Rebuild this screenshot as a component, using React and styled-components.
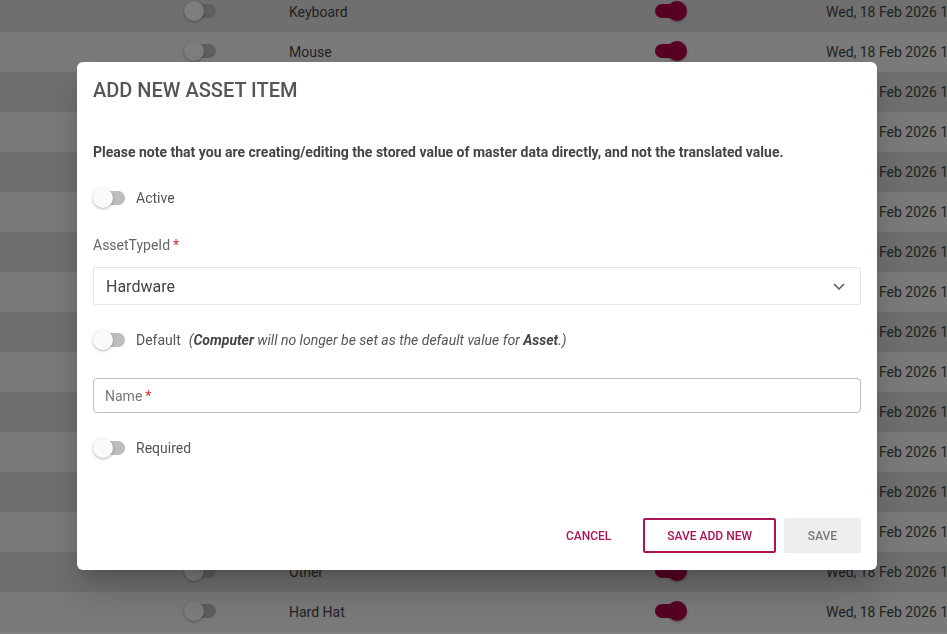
import React from "react";
import styled, { createGlobalStyle } from "styled-components";

const GlobalStyle = createGlobalStyle`
  html, body {
    margin: 0;
    padding: 0;
    height: 100%;
    overflow: hidden;
  }
  body {
    font-family: Roboto, "Noto Sans", "Liberation Sans", sans-serif;
    background: #ffffff;
  }
`;

const CRIMSON = "#ad1457";
const CRIMSON_DARK = "#b0004a";

const rows = [
  "Keyboard",
  "Mouse",
  "Monitor",
  "Laptop",
  "Printer",
  "Scanner",
  "Phone",
  "Tablet",
  "Headset",
  "Docking Station",
  "Webcam",
  "Router",
  "Projector",
  "Cable",
  "Other",
  "Hard Hat",
];

const Table = styled.div`
  display: flex;
  flex-direction: column;
  margin-top: -8px;
`;

const Row = styled.div`
  display: grid;
  grid-template-columns: 105px 366px 171px 1fr;
  align-items: center;
  height: 40px;
  padding-left: 184px;
  background: ${(p) => (p.$odd ? "#f4f4f4" : "#dedede")};
  color: #444;
  font-size: 14px;
  white-space: nowrap;
  overflow: hidden;
`;

const Track = styled.span`
  position: relative;
  display: inline-block;
  width: 32px;
  height: 20px;
  flex-shrink: 0;

  &::before {
    content: "";
    position: absolute;
    left: 7px;
    right: 0;
    top: 3px;
    height: 14px;
    border-radius: 7px;
    background: ${(p) => (p.$on ? CRIMSON_DARK : "#bdbdbd")};
    ${(p) => p.$on && "left: 0; right: 7px;"}
  }

  &::after {
    content: "";
    position: absolute;
    top: 0;
    ${(p) => (p.$on ? "right: 0;" : "left: 0;")}
    width: 20px;
    height: 20px;
    border-radius: 50%;
    background: ${(p) => (p.$on ? CRIMSON_DARK : "#fafafa")};
    box-shadow: 0 1px 3px rgba(0, 0, 0, 0.3);
  }
`;

const Overlay = styled.div`
  position: fixed;
  inset: 0;
  background: rgba(0, 0, 0, 0.5);
  display: flex;
  align-items: flex-start;
  padding: 62px 0 0 77px;
`;

const Dialog = styled.div`
  width: 800px;
  height: 508px;
  box-sizing: border-box;
  background: #ffffff;
  border-radius: 6px;
  box-shadow: 0 11px 15px -7px rgba(0, 0, 0, 0.2), 0 24px 38px 3px rgba(0, 0, 0, 0.14);
  display: flex;
  flex-direction: column;
  padding: 16px 16px 17px;
  color: #555;
`;

const Title = styled.h2`
  margin: 0;
  font-size: 20px;
  line-height: 24px;
  font-weight: 500;
  color: #555;
`;

const Note = styled.p`
  margin: 40px 0 0;
  font-size: 14px;
  line-height: 20px;
  font-weight: 700;
  color: #444;
`;

const SwitchRow = styled.label`
  display: flex;
  align-items: center;
  gap: 11px;
  margin-top: ${(p) => p.$gap}px;
  height: 20px;
  font-size: 14px;
  color: #555;
`;

const Hint = styled.span`
  font-style: italic;
  margin-left: 8px;
  color: #555;

  b {
    font-weight: 700;
    color: #444;
  }
`;

const FieldLabel = styled.div`
  margin-top: 27px;
  font-size: 14px;
  line-height: 20px;
  color: #666;
`;

const Star = styled.span`
  color: #d32f2f;
  margin-left: 3px;
`;

const Select = styled.div`
  margin-top: 12px;
  height: 38px;
  box-sizing: border-box;
  border: 1px solid #e6e6e6;
  border-radius: 2px;
  display: flex;
  align-items: center;
  justify-content: space-between;
  padding: 0 14px 0 12px;
  font-size: 16px;
  color: #444;
`;

const Input = styled.div`
  margin-top: 28px;
  height: 35px;
  box-sizing: border-box;
  border: 1px solid #bdbdbd;
  border-radius: 4px;
  display: flex;
  align-items: center;
  padding: 0 11px;
  font-size: 14px;
  color: #777;
`;

const Footer = styled.div`
  margin-top: auto;
  display: flex;
  justify-content: flex-end;
  align-items: center;
  gap: 8px;
`;

const Button = styled.button`
  height: 35px;
  box-sizing: border-box;
  padding: 0 ${(p) => (p.$variant === "outline" ? 22 : 20)}px;
  font-family: inherit;
  font-size: 12px;
  font-weight: 500;
  text-transform: uppercase;
  border-radius: 2px;
  cursor: pointer;
  border: ${(p) => (p.$variant === "outline" ? `2px solid ${CRIMSON}` : "none")};
  background: ${(p) => (p.$variant === "filled" ? "#eeeeee" : "transparent")};
  color: ${(p) => (p.$variant === "filled" ? "#777" : CRIMSON)};
  min-width: ${(p) => (p.$variant === "filled" ? "77px" : "auto")};
  margin-right: ${(p) => (p.$variant === "text" ? "4px" : "0")};
`;

const Chevron = () => (
  <svg width="14" height="14" viewBox="0 0 14 14" fill="none">
    <polyline points="2,5 7,10 12,5" stroke="#555" strokeWidth="1.5" />
  </svg>
);

export default function App() {
  return (
    <>
      <GlobalStyle />
      <Table>
        {rows.map((name, i) => (
          <Row key={name} $odd={i % 2 === 1}>
            <span>
              <Track />
            </span>
            <span>{name}</span>
            <span>
              <Track $on />
            </span>
            <span>Wed, 18 Feb 2026 14:32</span>
          </Row>
        ))}
      </Table>
      <Overlay>
        <Dialog>
          <Title>ADD NEW ASSET ITEM</Title>
          <Note>
            Please note that you are creating/editing the stored value of master data directly, and
            not the translated value.
          </Note>
          <SwitchRow $gap={26}>
            <Track />
            Active
          </SwitchRow>
          <FieldLabel>
            AssetTypeId<Star>*</Star>
          </FieldLabel>
          <Select>
            Hardware
            <Chevron />
          </Select>
          <SwitchRow $gap={25}>
            <Track />
            <span>
              Default
              <Hint>
                (<b>Computer</b> will no longer be set as the default value for <b>Asset</b>.)
              </Hint>
            </span>
          </SwitchRow>
          <Input>
            Name<Star>*</Star>
          </Input>
          <SwitchRow $gap={25}>
            <Track />
            Required
          </SwitchRow>
          <Footer>
            <Button $variant="text">Cancel</Button>
            <Button $variant="outline">Save add new</Button>
            <Button $variant="filled">Save</Button>
          </Footer>
        </Dialog>
      </Overlay>
    </>
  );
}
